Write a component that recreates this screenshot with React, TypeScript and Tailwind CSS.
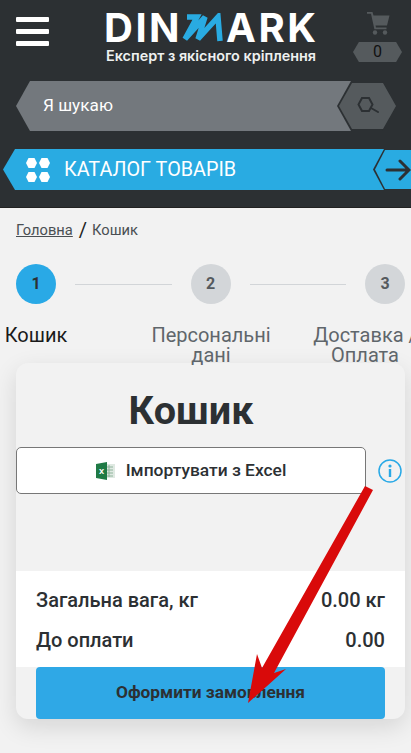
export default function App() {
  return (
    <div className="relative w-[411px] h-[753px] overflow-hidden bg-[#f2f2f2] font-['Roboto',sans-serif]">
      <header className="h-[208px] bg-[#2c3033] border-b border-[#222] relative">
        <div className="flex items-start pl-4 pr-[9px] pt-3">
          <div className="flex flex-col gap-[7px] mt-[5px] w-[33px]">
            <div className="h-[5px] rounded-[1px] bg-white" />
            <div className="h-[5px] rounded-[1px] bg-white" />
            <div className="h-[5px] rounded-[1px] bg-white" />
          </div>
          <div className="ml-[55px] w-[214px] flex flex-col">
            <div className="flex items-center h-[31px] font-['Inter',sans-serif] text-white font-bold text-[40px] leading-[31px]">
              <span className="tracking-[2.5px]">DIN</span>
              <svg width="44" height="30" viewBox="0 0 44 30" className="shrink-0">
                <path fill="none" stroke="#29abe2" strokeWidth="5.5" strokeLinejoin="miter" strokeMiterlimit="3" d="M5 4H15L3 26L23 4L16 26L36 4L38 28" />
              </svg>
              <span className="tracking-[2.5px]">ARK</span>
            </div>
            <div className="mt-1 ml-[2px] font-['Inter',sans-serif] text-[#eef0f0] font-semibold text-[14.4px] leading-[17px] whitespace-nowrap">Експерт з якісного кріплення</div>
          </div>
          <div className="ml-auto w-[49px] flex flex-col items-center">
            <svg width="24" height="23" viewBox="0 0 24 23">
              <path fill="#555a5d" d="M1 0h5.5l1 3.5H23.5l-2.5 10H9.5l.5 2h10.5v1.8H8.4L5 1.8H1z" />
              <circle cx="9" cy="20.5" r="2.2" fill="#555a5d" />
              <circle cx="19" cy="20.5" r="2.2" fill="#555a5d" />
            </svg>
            <div className="mt-[7px] w-[49px] h-5 bg-[#555a5d] text-[#111] text-[16px] flex items-center justify-center [clip-path:polygon(12%_0,88%_0,100%_50%,88%_100%,12%_100%,0_50%)]">0</div>
          </div>
        </div>

        <div className="relative mt-[17px] ml-4 w-[380px] h-[50px]">
          <div className="w-[338px] h-[50px] bg-[#73787d] flex items-center pl-[27px] text-white text-[17.2px] [clip-path:polygon(14px_0,100%_0,100%_100%,14px_100%,0_50%)]">Я шукаю</div>
          <div className="absolute right-0 top-0 w-[59px] h-[50px] bg-[#2c3033] [clip-path:polygon(14px_0,45px_0,100%_50%,45px_100%,14px_100%,0_50%)]" />
          <div className="absolute right-0 top-[2px] w-[57px] h-[46px] bg-[#555a5d] flex items-center justify-center [clip-path:polygon(13px_0,44px_0,100%_50%,44px_100%,13px_100%,0_50%)]">
            <svg width="24" height="18" viewBox="0 0 24 18" fill="none" stroke="#2c3033" strokeWidth="2">
              <path d="M6 1h7l3.5 6.5L13 14H6L2.5 7.5z" />
              <path d="M15 11l7 4" strokeLinecap="round" />
            </svg>
          </div>
        </div>

        <div className="relative mt-[18px] ml-[3px] w-[408px] h-[41px]">
          <div className="w-[382px] h-[41px] bg-[#29abe2] flex items-center pl-[22px] [clip-path:polygon(12px_0,100%_0,100%_100%,12px_100%,0_50%)]">
            <svg width="26" height="26" viewBox="0 0 26 26" fill="white">
              <path d="M3.5 1h6L12 6l-2.5 5h-6L1 6z" />
              <path d="M16.5 1h6L25 6l-2.5 5h-6L14 6z" />
              <path d="M3.5 15h6L12 20l-2.5 5h-6L1 20z" />
              <path d="M16.5 15h6L25 20l-2.5 5h-6L14 20z" />
            </svg>
            <span className="ml-[13px] text-white text-[19.8px]">КАТАЛОГ ТОВАРІВ</span>
          </div>
          <div className="absolute right-0 top-0 w-[38px] h-[41px] bg-[#2c3033] [clip-path:polygon(11px_0,100%_0,100%_100%,11px_100%,0_50%)]" />
          <div className="absolute right-0 top-[1px] w-[36px] h-[39px] bg-[#29abe2] flex items-center justify-end [clip-path:polygon(10px_0,100%_0,100%_100%,10px_100%,0_50%)]">
            <svg width="26" height="22" viewBox="0 0 26 22" fill="none" stroke="#2c3033" strokeWidth="3" strokeLinecap="round">
              <path d="M2 11h21M15 2l9 9-9 9" />
            </svg>
          </div>
        </div>
      </header>

      <div className="mt-3 ml-4 h-5 flex items-center text-[#4a4f53] text-[14.7px]">
        <span className="underline">Головна</span>
        <span className="ml-[6px] mr-[5px] text-[#222] text-[20px] leading-none">/</span>
        <span>Кошик</span>
      </div>

      <div className="mt-6 ml-4 mr-[6px] flex items-center">
        <div className="w-[40px] h-[40px] rounded-full bg-[#29a9e6] flex items-center justify-center text-[#2c3033] font-bold text-[16px]">1</div>
        <div className="flex-1 mx-[19px] h-[1px] bg-[#d2d5d8]" />
        <div className="w-[40px] h-[40px] rounded-full bg-[#d3d6d9] flex items-center justify-center text-[#555a5e] font-bold text-[16px]">2</div>
        <div className="flex-1 mx-[19px] h-[1px] bg-[#d2d5d8]" />
        <div className="w-[40px] h-[40px] rounded-full bg-[#d3d6d9] flex items-center justify-center text-[#555a5e] font-bold text-[16px]">3</div>
      </div>

      <div className="mt-[21px] flex text-[20px] leading-[20px] text-center h-[38px]">
        <div className="w-[72px] shrink-0 text-[#1a1a1a]">Кошик</div>
        <div className="w-[120px] shrink-0 ml-[79px] text-[#5f666b]">Персональні дані</div>
        <div className="w-[110px] shrink-0 ml-[39px] text-[#5f666b]">Доставка / Оплата</div>
      </div>

      <main className="ml-4 mr-[6px] h-[356px] rounded-xl bg-[#f2f2f2] shadow-[0_8px_24px_rgba(0,0,0,0.12)] flex flex-col overflow-hidden">
        <h1 className="mt-[19px] h-[58px] pr-[39px] text-center text-[#2c3033] font-bold text-[39.6px] leading-[58px]">Кошик</h1>
        <div className="mt-[7px] flex items-center">
          <div className="w-[350px] h-[47px] bg-white border border-[#777] rounded-[5px] flex items-center justify-center gap-[11px] text-[#2c3033] font-medium text-[17.4px]">
            <svg width="19" height="18" viewBox="0 0 19 18">
              <rect x="7" y="2" width="12" height="14" fill="#dfe9e2" />
              <path stroke="#8fb49c" strokeWidth="1" d="M9 5h8M9 8h8M9 11h8M9 14h8M13 3v12" />
              <path fill="#1f7a45" d="M0 2l11-2v18L0 16z" />
              <text x="5.5" y="12" fill="white" fontSize="8" fontWeight="700" textAnchor="middle">X</text>
            </svg>
            <span>Імпортувати з Excel</span>
          </div>
          <svg width="24" height="24" viewBox="0 0 24 24" className="ml-[12px]" fill="none">
            <circle cx="12" cy="12" r="11" stroke="#29a9e6" strokeWidth="1.5" />
            <circle cx="12" cy="7" r="1.6" fill="#29a9e6" />
            <rect x="10.8" y="10" width="2.4" height="8" fill="#29a9e6" />
          </svg>
        </div>
        <div className="mt-[77px] h-[96px] bg-white px-5 pt-[17px] text-[#2c3033] font-medium text-[20px] leading-[24px] flex flex-col gap-[16px]">
          <div className="flex justify-between"><span>Загальна вага, кг</span><span>0.00 кг</span></div>
          <div className="flex justify-between"><span>До оплати</span><span>0.00</span></div>
        </div>
        <div className="mx-5 h-[52px] rounded-[4px] bg-[#2fa8e6] flex items-center justify-center text-[#2c3033] font-bold text-[17.3px]">Оформити замовлення</div>
      </main>

      <svg width="411" height="753" viewBox="0 0 411 753" className="absolute left-0 top-0 pointer-events-none">
        <path fill="#d90a0a" d="M365 486 L373 490 L274 673 L286 669 L248 703 L257 654 L262 668 Z" />
      </svg>
    </div>
  );
}
